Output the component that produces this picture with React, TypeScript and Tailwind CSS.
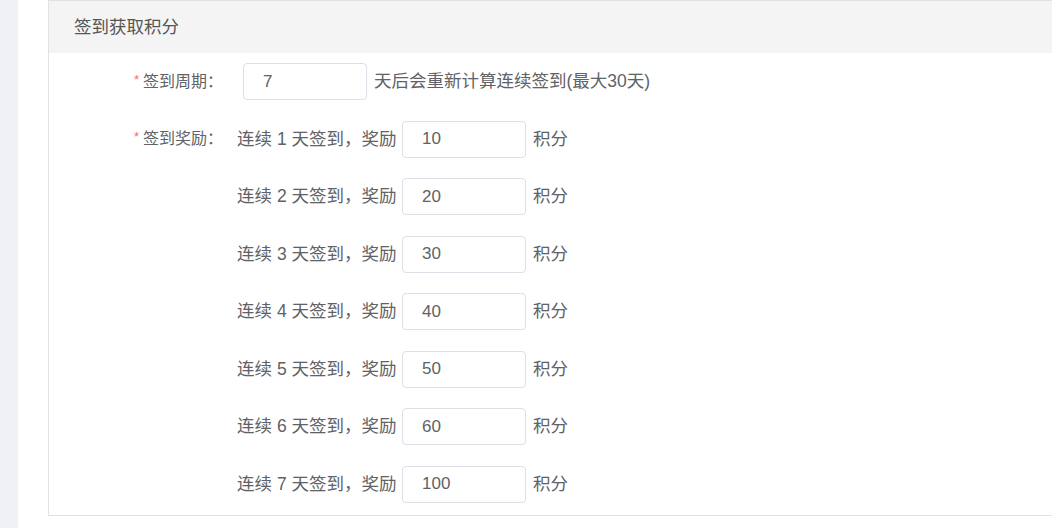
import React from "react";

const rewards = [10, 20, 30, 40, 50, 60, 100];

function Label({ text }: { text: string }) {
	return (
		<div className="w-[188px] shrink-0 flex justify-end items-center pr-[14px] text-[16px] text-[#606266]">
			<span className="text-[#f56c6c] text-[13px] mr-[4px] -mt-[4px]">*</span>
			<span>{text}：</span>
		</div>
	);
}

function Box({ value, className = "" }: { value: number; className?: string }) {
	return (
		<div
			className={`w-[124px] h-[37px] shrink-0 border border-[#dcdfe6] rounded-[4px] bg-white flex items-center pl-[19px] text-[17px] text-[#606266] ${className}`}>
			{value}
		</div>
	);
}

export default function App() {
	return (
		<div
			className="flex min-h-screen bg-white"
			style={{ fontFamily: '"Liberation Sans", "Noto Sans CJK SC", sans-serif' }}>
			<div className="w-[18px] shrink-0 bg-[#f0f1f5]" />
			<div className="flex-1 pl-[30px] pb-[13px]">
				<div className="border border-r-0 border-[#e2e2e2]">
					<div className="h-[52px] bg-[#f4f4f4] flex items-center pl-[25px] pt-[1px] text-[17.5px] text-[#555]">
						签到获取积分
					</div>
					<div className="pt-[10px] pb-[12px] flex flex-col gap-[20.5px]">
						<div className="flex items-center h-[37px]">
							<Label text="签到周期" />
							<Box value={7} className="ml-[6px]" />
							<span className="ml-[7px] text-[17.5px] text-[#606266]">天后会重新计算连续签到(最大30天)</span>
						</div>
						{rewards.map((points, i) => (
							<div key={i} className="flex items-center h-[37px]">
								{i === 0 ? <Label text="签到奖励" /> : <div className="w-[188px] shrink-0" />}
								<span className="w-[165px] shrink-0 text-[17.5px] text-[#606266] whitespace-nowrap">
									连续 {i + 1} 天签到，奖励
								</span>
								<Box value={points} />
								<span className="ml-[7px] text-[17.5px] text-[#606266]">积分</span>
							</div>
						))}
					</div>
				</div>
			</div>
		</div>
	);
}
